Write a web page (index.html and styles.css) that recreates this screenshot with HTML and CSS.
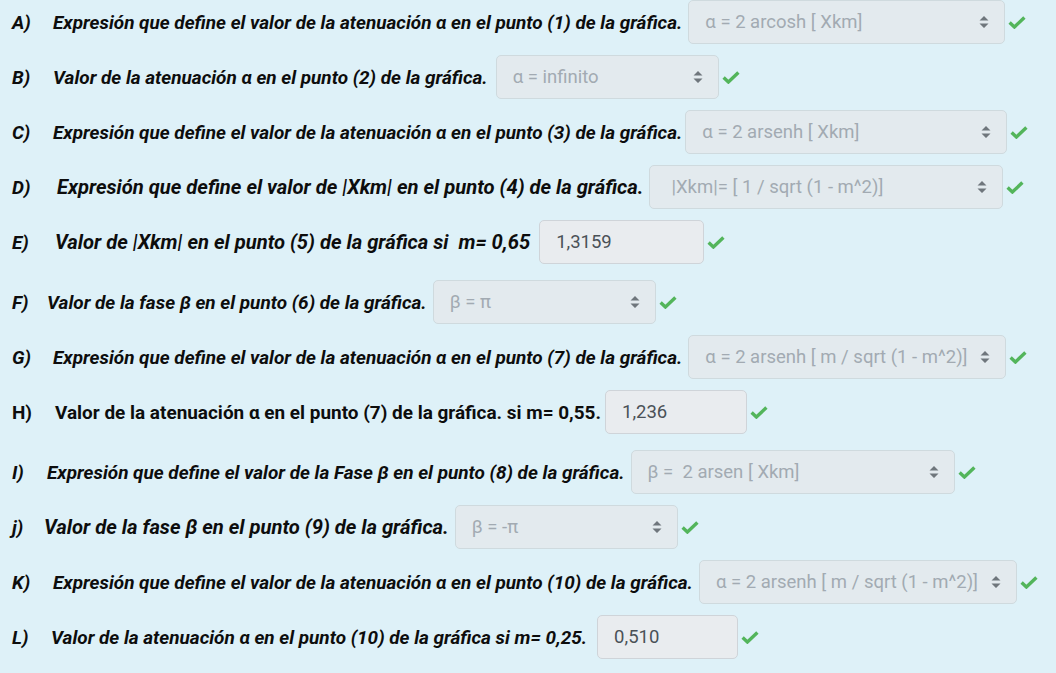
FILE: index.html
```html
<!DOCTYPE html>
<html lang="es">
<head>
<meta charset="utf-8">
<title>Cuestionario</title>
<link rel="stylesheet" href="styles.css">
</head>
<body>
<svg width="0" height="0" class="defs">
  <defs>
    <symbol id="chk" viewBox="0 0 18 13"><path d="M1.6 6.6 L6.4 11 L16.4 1.6" fill="none" stroke="currentColor" stroke-width="3.4" stroke-linejoin="miter"/></symbol>
    <symbol id="arr" viewBox="0 0 10 14"><path d="M5 1 L9.5 5.6 H0.5 Z M5 13 L9.5 8.4 H0.5 Z" fill="currentColor"/></symbol>
  </defs>
</svg>
<div class="quiz">
  <div class="row">
    <span class="letter w41">A)</span><span class="label">Expresión que define el valor de la atenuación α en el punto (1) de la gráfica.</span>
    <span class="sel s317"><span class="val">α = 2 arcosh [ Xkm]</span><svg class="arr"><use href="#arr"/></svg></span>
    <svg class="chk"><use href="#chk"/></svg>
  </div>
  <div class="row">
    <span class="letter w41">B)</span><span class="label">Valor de la atenuación α en el punto (2) de la gráfica.</span>
    <span class="sel s223 m8"><span class="val">α = infinito</span><svg class="arr"><use href="#arr"/></svg></span>
    <svg class="chk"><use href="#chk"/></svg>
  </div>
  <div class="row">
    <span class="letter w41">C)</span><span class="label">Expresión que define el valor de la atenuación α en el punto (3) de la gráfica.</span>
    <span class="sel s322 m3"><span class="val">α = 2 arsenh [ Xkm]</span><svg class="arr"><use href="#arr"/></svg></span>
    <svg class="chk"><use href="#chk"/></svg>
  </div>
  <div class="row">
    <span class="letter w45">D)</span><span class="label big">Expresión que define el valor de |Xkm| en el punto (4) de la gráfica.</span>
    <span class="sel s354"><span class="val pad">|Xkm|= [ 1 / sqrt (1 - m^2)]</span><svg class="arr"><use href="#arr"/></svg></span>
    <svg class="chk"><use href="#chk"/></svg>
  </div>
  <div class="row row-input">
    <span class="letter w43">E)</span><span class="label big">Valor de |Xkm| en el punto (5) de la gráfica si&nbsp; m= 0,65</span>
    <span class="inp i165">1,3159</span>
    <svg class="chk"><use href="#chk"/></svg>
  </div>
  <div class="row">
    <span class="letter w35">F)</span><span class="label">Valor de la fase β en el punto (6) de la gráfica.</span>
    <span class="sel s223"><span class="val">β = π</span><svg class="arr"><use href="#arr"/></svg></span>
    <svg class="chk"><use href="#chk"/></svg>
  </div>
  <div class="row">
    <span class="letter w41">G)</span><span class="label">Expresión que define el valor de la atenuación α en el punto (7) de la gráfica.</span>
    <span class="sel s318"><span class="val">α = 2 arsenh [ m / sqrt (1 - m^2)]</span><svg class="arr"><use href="#arr"/></svg></span>
    <svg class="chk"><use href="#chk"/></svg>
  </div>
  <div class="row row-input">
    <span class="letter w43 upright">H)</span><span class="label upright">Valor de la atenuación α en el punto (7) de la gráfica. si m= 0,55.</span>
    <span class="inp i142 m4">1,236</span>
    <svg class="chk"><use href="#chk"/></svg>
  </div>
  <div class="row">
    <span class="letter w35">I)</span><span class="label">Expresión que define el valor de la Fase β en el punto (8) de la gráfica.</span>
    <span class="sel s324"><span class="val">β =&nbsp; 2 arsen [ Xkm]</span><svg class="arr"><use href="#arr"/></svg></span>
    <svg class="chk"><use href="#chk"/></svg>
  </div>
  <div class="row">
    <span class="letter w32">j)</span><span class="label big">Valor de la fase β en el punto (9) de la gráfica.</span>
    <span class="sel s223"><span class="val">β = -π</span><svg class="arr"><use href="#arr"/></svg></span>
    <svg class="chk"><use href="#chk"/></svg>
  </div>
  <div class="row">
    <span class="letter w41">K)</span><span class="label">Expresión que define el valor de la atenuación α en el punto (10) de la gráfica.</span>
    <span class="sel s318"><span class="val">α = 2 arsenh [ m / sqrt (1 - m^2)]</span><svg class="arr"><use href="#arr"/></svg></span>
    <svg class="chk"><use href="#chk"/></svg>
  </div>
  <div class="row row-input">
    <span class="letter w39">L)</span><span class="label">Valor de la atenuación α en el punto (10) de la gráfica si m= 0,25.</span>
    <span class="inp i141 m10">0,510</span>
    <svg class="chk"><use href="#chk"/></svg>
  </div>
</div>
</body>
</html>
```

FILE: styles.css
```css
html, body {
  margin: 0;
  padding: 0;
  background: #def1f8;
}
body {
  font-family: Roboto, "Noto Sans", "Liberation Sans", sans-serif;
  color: #0d0d0d;
  width: 1056px;
  height: 673px;
  overflow: hidden;
}
.defs {
  position: absolute;
  width: 0;
  height: 0;
}
.quiz {
  display: flex;
  flex-direction: column;
  gap: 11px;
  padding-left: 12px;
}
.row {
  display: flex;
  align-items: center;
  height: 44px;
  white-space: nowrap;
}
.row-input {
  margin-bottom: 5px;
}
.letter, .label {
  font-size: 18.95px;
  font-weight: 700;
  font-style: italic;
}
.label.big {
  font-size: 20.2px;
}
.label.upright, .letter.upright {
  font-style: normal;
}
.w32 { width: 32px; }
.w35 { width: 35px; }
.w39 { width: 39px; }
.w41 { width: 41px; }
.w43 { width: 43px; }
.w45 { width: 45px; }
.sel, .inp {
  box-sizing: border-box;
  height: 44px;
  margin-left: 6px;
  border-radius: 5px;
  display: flex;
  align-items: center;
  font-size: 18.5px;
  font-weight: 400;
  font-style: normal;
  flex: none;
}
.sel {
  background: #e3eaee;
  border: 1px solid #cfdade;
  color: #a2aab2;
  padding: 0 15px 0 16px;
}
.sel .val {
  flex: 1;
  overflow: hidden;
}
.sel .val.pad {
  padding-left: 5px;
}
.arr {
  width: 10px;
  height: 14px;
  color: #6f767c;
  flex: none;
}
.inp {
  background: #e9ecef;
  border: 1px solid #cfd4d9;
  color: #4a5157;
  padding: 0 16px;
  margin-left: 9px;
}
.sel.m8 { margin-left: 8px; }
.sel.m3 { margin-left: 3px; }
.inp.m4 { margin-left: 4px; }
.inp.m10 { margin-left: 10px; }
.s223 { width: 223px; }
.s317 { width: 317px; }
.s318 { width: 318px; }
.s322 { width: 322px; }
.s324 { width: 324px; }
.s354 { width: 354px; }
.i141 { width: 141px; }
.i142 { width: 142px; }
.i165 { width: 165px; }
.chk {
  width: 18px;
  height: 13px;
  margin-left: 3px;
  color: #53b55b;
  flex: none;
}
```
